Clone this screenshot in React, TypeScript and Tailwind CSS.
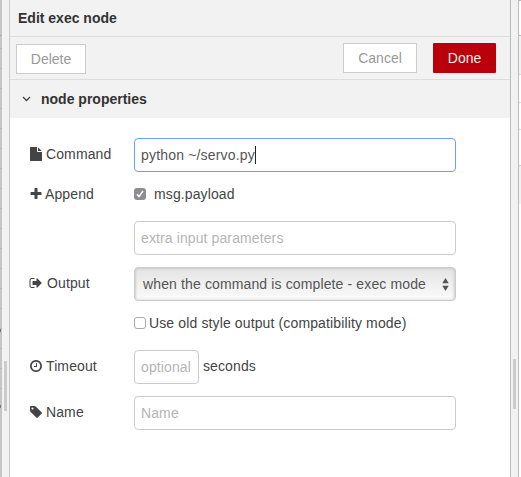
import React from "react";

const icons = {
  file: "M1152 512v-472q22 14 36 28l408 408q14 14 28 36h-472zm-128 32q0 40 28 68t68 28h544v1056q0 40-28 68t-68 28h-1344q-40 0-68-28t-28-68v-1600q0-40 28-68t68-28h800v544z",
  plus: "M1600 736v192q0 40-28 68t-68 28h-416v416q0 40-28 68t-68 28h-192q-40 0-68-28t-28-68v-416h-416q-40 0-68-28t-28-68v-192q0-40 28-68t68-28h416v-416q0-40 28-68t68-28h192q40 0 68 28t28 68v416h416q40 0 68 28t28 68z",
  signOut: "M704 1440q0 4 1 20t.5 26.5-3 23.5-10 19.5-20.5 6.5h-320q-119 0-203.5-84.5t-84.5-203.5v-704q0-119 84.5-203.5t203.5-84.5h320q13 0 22.5 9.5t9.5 22.5q0 4 1 20t.5 26.5-3 23.5-10 19.5-20.5 6.5h-320q-66 0-113 47t-47 113v704q0 66 47 113t113 47h312l11.5 1 11.5 3 8 5.5 7 9 2 13.5zm928-544q0 26-19 45l-544 544q-19 19-45 19t-45-19-19-45v-288h-448q-26 0-45-19t-19-45v-384q0-26 19-45t45-19h448v-288q0-26 19-45t45-19 45 19l544 544q19 19 19 45z",
  clock: "M1024 544v448q0 14-9 23t-23 9h-320q-14 0-23-9t-9-23v-64q0-14 9-23t23-9h224v-352q0-14 9-23t23-9h64q14 0 23 9t9 23zm416 352q0-148-73-273t-198-198-273-73-273 73-198 198-73 273 73 273 198 198 273 73 273-73 198-198 73-273zm224 0q0 209-103 385.5t-279.5 279.5-385.5 103-385.5-103-279.5-279.5-103-385.5 103-385.5 279.5-279.5 385.5-103 385.5 103 279.5 279.5 103 385.5z",
  tag: "M576 448q0-53-37.5-90.5t-90.5-37.5-90.5 37.5-37.5 90.5 37.5 90.5 90.5 37.5 90.5-37.5 37.5-90.5zm1067 576q0 53-37 90l-491 492q-39 37-91 37-53 0-90-37l-715-716q-38-37-64.5-101t-26.5-117v-416q0-52 38-90t90-38h416q53 0 117 26.5t102 64.5l715 714q37 39 37 91z",
};

function Label({ icon, text, className = "gap-[3px] pb-[2px]" }: { icon: keyof typeof icons; text: string; className?: string }) {
  return (
    <div className={`flex w-[104px] shrink-0 items-center ${className}`}>
      <svg viewBox="0 0 1792 1792" className="-ml-px size-[14px] shrink-0 fill-[#444]">
        <path d={icons[icon]} />
      </svg>
      <span>{text}</span>
    </div>
  );
}

const field = "flex h-[34px] items-center rounded-[4px] border bg-white px-[6px]";

function Handle() {
  return <div className="mt-[19px] h-[50px] w-[3px] bg-[#ccc]" />;
}

export default function App() {
  return (
    <div className="flex h-[477px] w-[521px] overflow-hidden bg-white font-['Liberation_Sans',Arial,sans-serif] text-[14px] leading-5 text-[#444]">
      <div className="h-full w-[2px] shrink-0 bg-[#c6c6c6] pt-[35px]">
        <div className="h-px bg-[#aaa]" />
        <div className="mt-[12px] h-[281px] bg-[repeating-linear-gradient(#b8b8b8_0_1px,transparent_1px_20px)]" />
        <div className="h-[3px] w-px bg-[#777]" />
        <div className="mt-[16px] h-[57px] bg-[repeating-linear-gradient(#b8b8b8_0_1px,transparent_1px_20px)]" />
        <div className="h-[3px] w-px bg-[#777]" />
      </div>
      <div className="flex w-[8px] shrink-0 justify-center border-r border-[#ccc] bg-[#f2f2f2] pt-[342px]">
        <Handle />
      </div>
      <div className="flex w-[500px] shrink-0 flex-col">
        <div className="flex h-[37px] items-center border-b border-[#ddd] bg-[#f2f2f2] pl-2 font-bold text-[#333]">Edit exec node</div>
        <div className="flex h-[43px] items-start border-b border-[#ddd] bg-[#f2f2f2] pt-[6px] pr-[14px] pl-[6px]">
          <div className="mt-px flex h-[30px] w-[70px] items-center justify-center border border-[#ccc] bg-white text-[#999]">Delete</div>
          <div className="ml-auto flex h-[30px] w-[74px] items-center justify-center border border-[#ccc] bg-white text-[#999]">Cancel</div>
          <div className="ml-4 flex h-[30px] w-[63px] items-center justify-center rounded-[1px] bg-[#b9000b] text-[#eee]">Done</div>
        </div>
        <div className="flex h-[38px] items-center bg-[#f2f2f2] pl-[12px] font-bold text-[#333]">
          <svg viewBox="0 0 9 6" className="mr-[10px] h-[6px] w-[9px] fill-none stroke-[#444] stroke-[1.3]">
            <path d="M1 1l3.5 3.5L8 1" />
          </svg>
          node properties
        </div>
        <div className="flex flex-1 flex-col bg-white pt-5 pl-5 tracking-[0.11px]">
          <div className="flex h-[34px] items-center">
            <Label icon="file" text="Command" />
            <div className={`${field} w-[322px] border-[#66a3ee] text-[#555]`}>
              <span className="tracking-[0.18px]">python ~/servo.py</span>
              <span className="h-[18px] w-px bg-[#222]" />
            </div>
          </div>
          <div className="mt-[12px] flex h-5 items-center">
            <Label icon="plus" text="Append" className="gap-[2px]" />
            <div className="flex size-[12px] items-center justify-center rounded-[3px] bg-[#8d8d92]">
              <svg viewBox="0 0 10 10" className="size-[10px] fill-none stroke-white stroke-[1.5]">
                <path d="M2 5.3l2 2.3L8 2" />
              </svg>
            </div>
            <span className="ml-2">msg.payload</span>
          </div>
          <div className={`${field} mt-[17px] ml-[104px] w-[322px] border-[#ccc] text-[#b5b5b5]`}>extra input parameters</div>
          <div className="mt-[12px] flex h-[34px] items-center">
            <Label icon="signOut" text="Output" className="gap-[4px] pb-[2px]" />
            <div className="flex h-[34px] w-[322px] items-center justify-between rounded-[4px] border border-[#ccc] bg-linear-to-b from-[#e4e4e4] to-[#fbfbfb] pr-[6px] pl-2 text-[#555] shadow-[inset_1px_1px_2px_#d0d0d0,inset_-1px_0_3px_#ccc]">
              <span className="tracking-[0.13px]">when the command is complete - exec mode</span>
              <svg viewBox="0 0 7 13" className="h-[13px] w-[7px] fill-[#555]">
                <path d="M.3 5.2h6.4L3.5 0zM.3 7.8h6.4L3.5 13z" />
              </svg>
            </div>
          </div>
          <div className="mt-[12px] ml-[104px] flex h-5 items-center">
            <div className="size-[12px] rounded-[3px] border border-[#aaa] bg-white" />
            <span className="ml-[3px] tracking-[0.13px]">Use old style output (compatibility mode)</span>
          </div>
          <div className="mt-[17px] flex h-[34px] items-center">
            <Label icon="clock" text="Timeout" />
            <div className={`${field} w-[65px] border-[#ccc] text-[#b5b5b5]`}>optional</div>
            <span className="ml-1 pb-[2px]">seconds</span>
          </div>
          <div className="mt-[12px] flex h-[34px] items-center">
            <Label icon="tag" text="Name" />
            <div className={`${field} w-[322px] border-[#ccc] text-[#b5b5b5]`}>Name</div>
          </div>
        </div>
      </div>
      <div className="flex w-[9px] shrink-0 justify-center border-x border-[#bbb] bg-[#f2f2f2] pt-[340px]">
        <Handle />
      </div>
      <div className="flex flex-1 flex-col bg-white">
        <div className="h-[36px] border-y border-[#bbb]" />
        <div className="h-[39px] border-b border-[#ddd] bg-[#f2f2f2]" />
        <div className="h-[28px] border-b border-[#ddd]" />
        <div className="h-[27px] border-b border-[#ddd]" />
        <div className="h-[36px] border-b border-[#ccc]" />
        <div className="h-[38px] bg-[#f2f2f2]" />
      </div>
    </div>
  );
}
